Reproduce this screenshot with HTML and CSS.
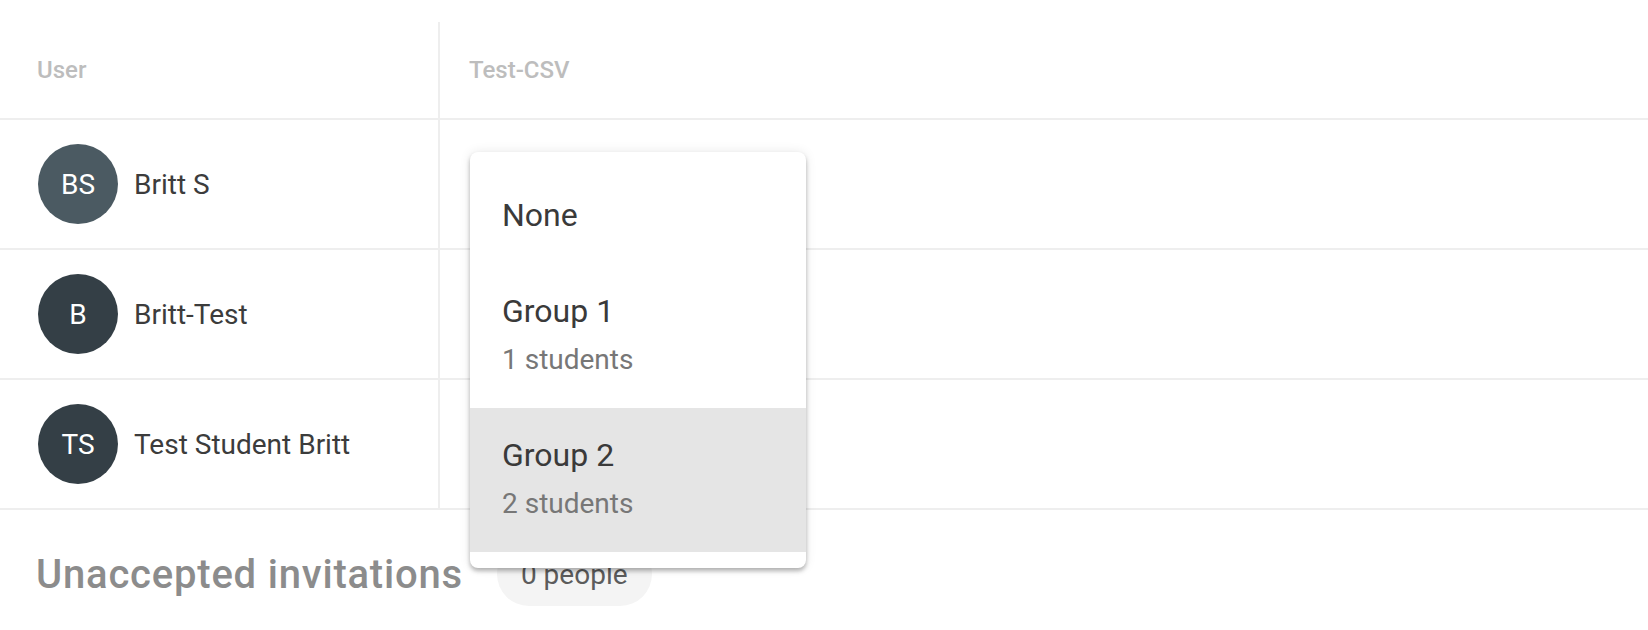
FILE: index.html
```html
<!DOCTYPE html>
<html lang="en">
<head>
<meta charset="utf-8">
<title>Groups</title>
<link rel="stylesheet" href="styles.css">
</head>
<body>
<div class="page">
  <div class="table">
    <div class="cell head first">User</div>
    <div class="cell head second">Test-CSV</div>

    <div class="cell first user">
      <span class="avatar light">BS</span><span class="name">Britt S</span>
    </div>
    <div class="cell second"></div>

    <div class="cell first user">
      <span class="avatar">B</span><span class="name">Britt-Test</span>
    </div>
    <div class="cell second"></div>

    <div class="cell first user">
      <span class="avatar">TS</span><span class="name">Test Student Britt</span>
    </div>
    <div class="cell second"></div>
  </div>

  <div class="invites">
    <h2 class="invites-title">Unaccepted invitations</h2>
    <span class="chip">0 people</span>
  </div>

  <div class="menu">
    <div class="menu-item single">None</div>
    <div class="menu-item">
      <div class="primary">Group 1</div>
      <div class="secondary">1 students</div>
    </div>
    <div class="menu-item active">
      <div class="primary">Group 2</div>
      <div class="secondary">2 students</div>
    </div>
  </div>
</div>
</body>
</html>
```

FILE: styles.css
```css
* { box-sizing: border-box; }

html, body {
  margin: 0;
  padding: 0;
  background: #ffffff;
}

body {
  font-family: Roboto, "Liberation Sans", Arial, sans-serif;
  color: #3c3c3c;
}

.page {
  position: relative;
  width: 1648px;
  height: 630px;
  overflow: hidden;
  padding-top: 22px;
}

.table {
  display: grid;
  grid-template-columns: 440px 1fr;
}

.cell {
  height: 130px;
  border-bottom: 2px solid #eeeeee;
  display: flex;
  align-items: center;
}

.cell.head {
  height: 98px;
  font-size: 24px;
  font-weight: 500;
  color: #bdbdbd;
}

.cell.first {
  border-right: 2px solid #eeeeee;
  padding-left: 37px;
}

.cell.first.user {
  padding-left: 38px;
}

.cell.second {
  padding-left: 29px;
}

.avatar {
  width: 80px;
  height: 80px;
  border-radius: 50%;
  background: #343f46;
  color: #ffffff;
  font-size: 28px;
  display: flex;
  align-items: center;
  justify-content: center;
  flex: none;
}

.avatar.light {
  background: #4b5a62;
}

.name {
  margin-left: 16px;
  font-size: 28px;
  color: #3c3c3c;
}

.invites {
  display: flex;
  align-items: center;
  gap: 34px;
  margin-top: 32px;
  padding-left: 36px;
}

.invites-title {
  margin: 0;
  font-size: 40px;
  font-weight: 500;
  letter-spacing: 0.8px;
  color: #8c8c8c;
}

.chip {
  height: 64px;
  padding: 0 24px;
  border-radius: 32px;
  background: #f4f4f4;
  color: #5c5c5c;
  font-size: 28px;
  display: flex;
  align-items: center;
}

.menu {
  position: absolute;
  left: 470px;
  top: 152px;
  width: 336px;
  padding: 16px 0;
  background: #ffffff;
  border-radius: 8px;
  box-shadow: 0 3px 4px rgba(0, 0, 0, 0.28), 0 0 12px rgba(0, 0, 0, 0.09);
}

.menu-item {
  height: 144px;
  padding: 27px 32px 29px;
}

.menu-item.single {
  height: 96px;
  padding: 0 32px 2px;
  line-height: 94px;
  font-size: 32px;
  color: #3a3a3a;
}

.menu-item.active {
  background: #e5e5e5;
}

.primary {
  font-size: 32px;
  line-height: 40px;
  color: #3a3a3a;
}

.secondary {
  margin-top: 9px;
  font-size: 28px;
  line-height: 40px;
  color: #777777;
}
```
